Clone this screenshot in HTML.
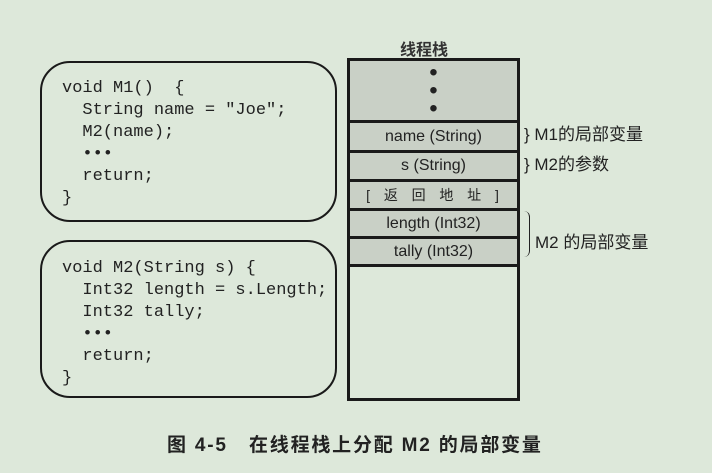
<!DOCTYPE html>
<html><head><meta charset="utf-8"><style>
body{margin:0;width:712px;height:473px;background:#dde8da;position:relative;overflow:hidden;font-family:"Liberation Sans","Noto Sans CJK SC",sans-serif;color:#1a1a1a}
.a{position:absolute}
.box{position:absolute;border:2px solid #1a1a1a;border-radius:30px;box-sizing:border-box}
.code{position:absolute;font-family:"Liberation Mono",monospace;font-size:17px;line-height:22px;white-space:pre;color:#222}
.stack{position:absolute;left:347px;top:58px;width:173px;height:343px;border:3px solid #1a1a1a;box-sizing:border-box}
.cell{position:absolute;left:0;width:167px;background:#c9d0c6;border-bottom:3px solid #1a1a1a;box-sizing:border-box;text-align:center;font-size:16px;color:#222}
.lab{position:absolute;font-size:17px;color:#222}
</style></head><body>
<div class="a" style="left:400px;top:36px;font-size:16px;font-weight:bold;color:#333">线程栈</div>
<div class="box" style="left:40px;top:61px;width:297px;height:161px"></div>
<div class="code" style="left:62px;top:78px">void M1()  {
  String name = "Joe";
  M2(name);
  •••
  return;
}</div>
<div class="box" style="left:40px;top:240px;width:297px;height:158px"></div>
<div class="code" style="left:62px;top:258px">void M2(String s) {
  Int32 length = s.Length;
  Int32 tally;
  •••
  return;
}</div>
<div class="stack">
<div class="cell" style="top:0;height:62px"><div style="font-size:24px;line-height:18px;padding-top:3px">•<br>•<br>•</div></div>
<div class="cell" style="top:62px;height:30px;line-height:27px">name (String)</div>
<div class="cell" style="top:92px;height:29px;line-height:26px">s (String)</div>
<div class="cell" style="top:121px;height:29px;line-height:26px;font-size:14px;letter-spacing:2px">[ &nbsp;返 &nbsp;回 &nbsp;地 &nbsp;址 &nbsp;]</div>
<div class="cell" style="top:150px;height:28px;line-height:25px">length (Int32)</div>
<div class="cell" style="top:178px;height:28px;line-height:25px">tally (Int32)</div>
</div>
<div class="lab" style="left:524px;top:120px">} M1的局部变量</div>
<div class="lab" style="left:524px;top:150px">} M2的参数</div>
<div class="a" style="left:524px;top:211px;width:5px;height:46px;border-right:1.5px solid #222;border-radius:0 6px 6px 0"></div>
<div class="lab" style="left:535px;top:228px">M2 的局部变量</div>
<div class="a" style="left:167px;top:430px;font-size:19px;font-weight:bold;color:#222;letter-spacing:1.8px">图 4-5 &nbsp;&nbsp;在线程栈上分配 M2 的局部变量</div>
</body></html>
